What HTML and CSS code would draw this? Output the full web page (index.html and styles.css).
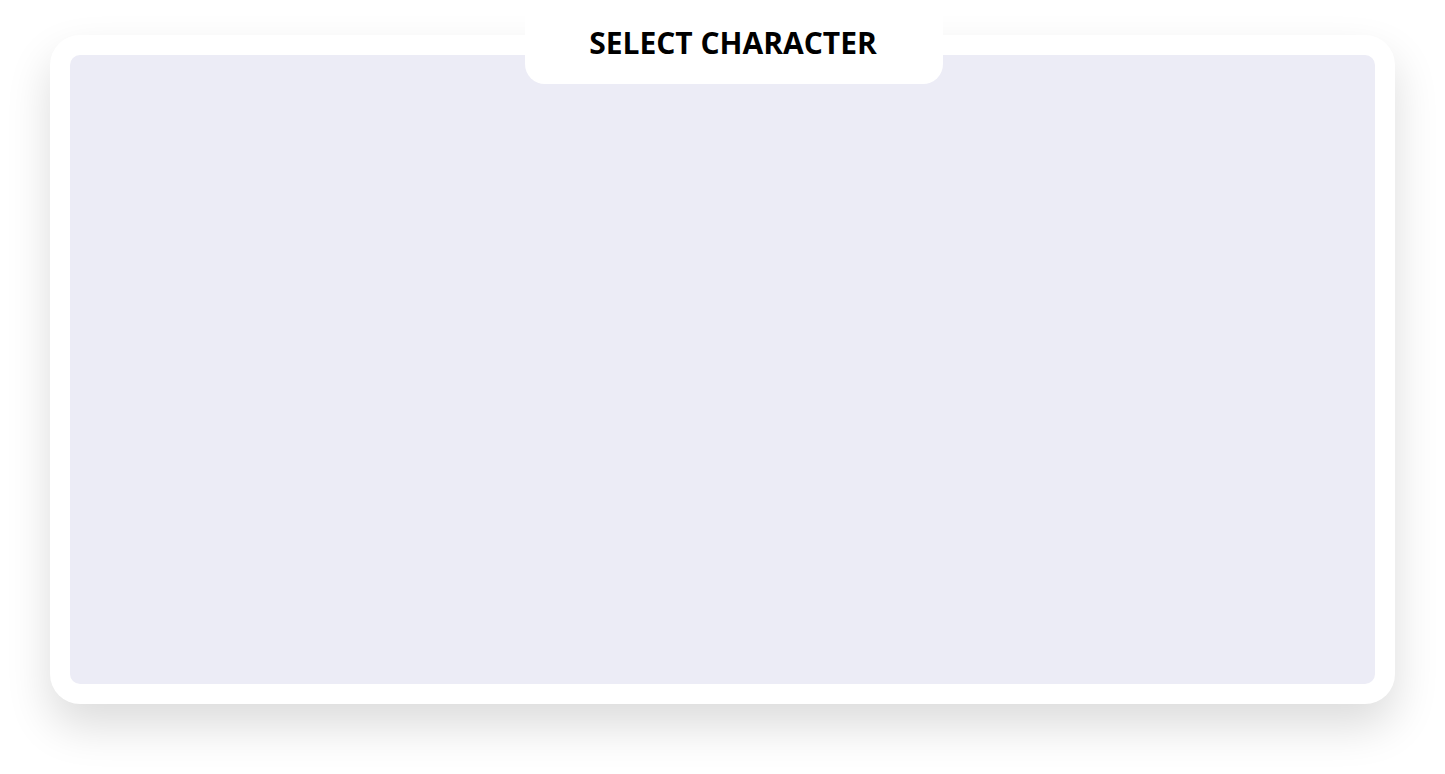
FILE: index.html
```html
<!DOCTYPE html>
<html>
<head>
<meta charset="utf-8">
<link rel="stylesheet" href="styles.css">
</head>
<body>
<div class="card">
  <div class="tab"><h1 class="title">SELECT CHARACTER</h1></div>
  <div class="stage"></div>
</div>
</body>
</html>
```
FILE: styles.css
```css
html, body {
  margin: 0;
  background: #ffffff;
}
body {
  box-sizing: border-box;
  min-height: 100vh;
  padding: 35px 50px 70px 50px;
  font-family: "Open Sans", "Liberation Sans", sans-serif;
}
.card {
  position: relative;
  background: #ffffff;
  border-radius: 30px;
  padding: 20px;
  height: 629px;
  box-shadow: 0 22px 45px rgba(0, 0, 0, 0.14);
}
.stage {
  height: 100%;
  background: #ececf6;
  border-radius: 10px;
}
.tab {
  position: absolute;
  top: -35px;
  left: 475px;
  width: 418px;
  height: 84px;
  box-sizing: border-box;
  padding-top: 2px;
  padding-right: 2px;
  background: #ffffff;
  border-radius: 0 0 20px 20px;
  display: flex;
  align-items: center;
  justify-content: center;
}
.title {
  margin: 0;
  font-size: 30px;
  font-weight: 700;
  color: #000;
  letter-spacing: 0;
  line-height: 1;
}
```
